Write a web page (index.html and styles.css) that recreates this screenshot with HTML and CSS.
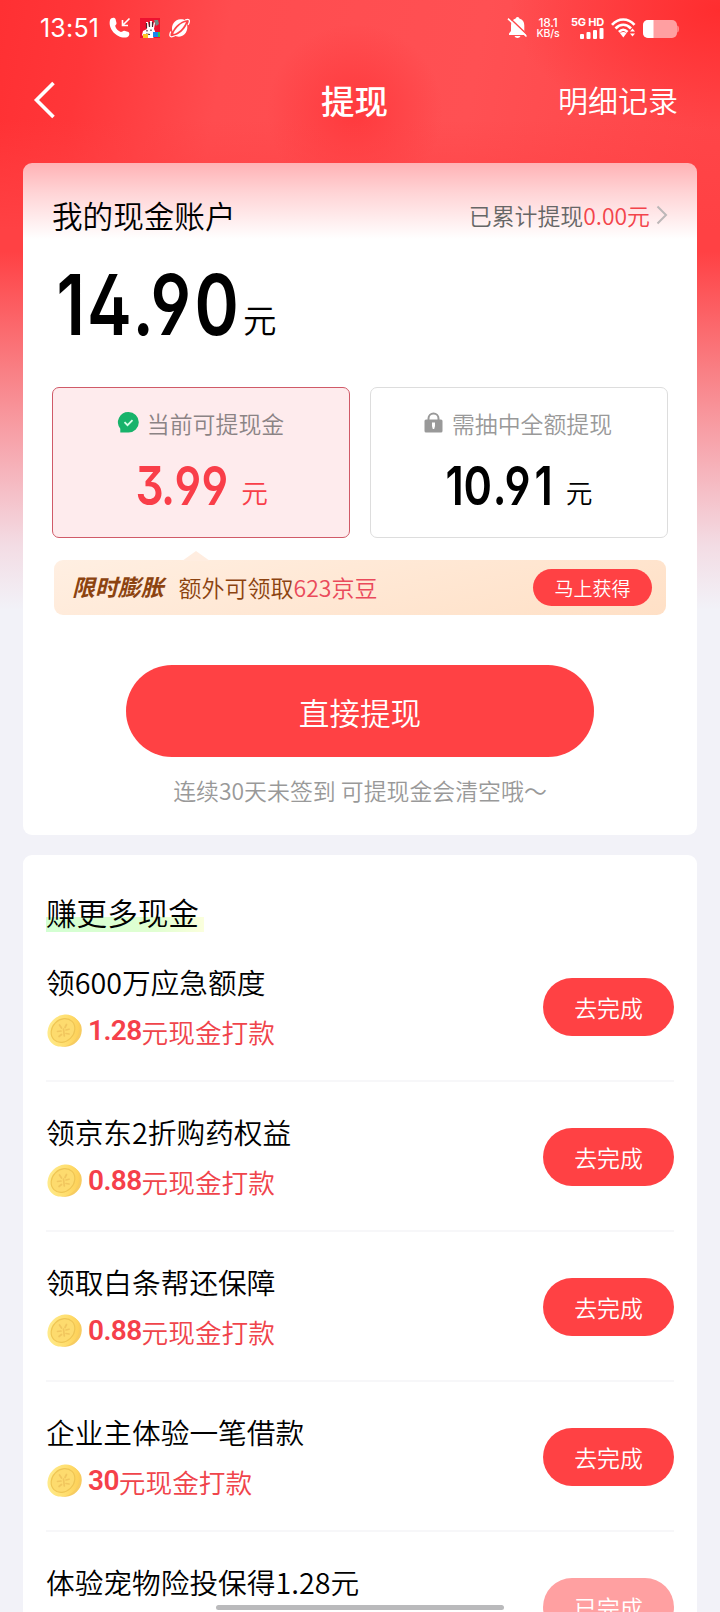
FILE: index.html
```html
<!DOCTYPE html>
<html lang="zh-CN">
<head>
<meta charset="utf-8">
<title>提现</title>
<link rel="stylesheet" href="styles.css">
</head>
<body>
<svg class="defs" width="0" height="0" aria-hidden="true">
  <defs>
    <linearGradient id="coinFace" x1="0" y1="0" x2="1" y2="1">
      <stop offset="0" stop-color="#ffee94"/><stop offset=".55" stop-color="#ffdf70"/><stop offset="1" stop-color="#fcc94c"/>
    </linearGradient>
    <symbol id="coin" viewBox="0 0 36 36">
      <ellipse cx="19.500" cy="18.500" rx="16" ry="14.500" fill="#f7cc60" transform="rotate(-45 19.500 18.500)"/>
      <ellipse cx="16.500" cy="17.500" rx="17.200" ry="14.800" fill="url(#coinFace)" transform="rotate(-45 16.500 17.500)"/>
      <ellipse cx="16" cy="17.500" rx="12.800" ry="10.800" fill="#fddb6e" stroke="#efc554" stroke-width="1.200" transform="rotate(-45 16 17.500)"/>
      <path d="M12.500 12l2 3M19.500 11.500l-1.500 3M10.500 18.500l3.500-.5M19 17l3-.8M12 23.500l2.500-2M19 20.500l3 .5M16.500 16l.8 7" fill="none" stroke="#f1c65e" stroke-width="1.700" stroke-linecap="round"/>
    </symbol>
  </defs>
</svg>
<div class="page">
  <div class="status">
    <span class="time">13:51</span>
    <svg class="ic-call" width="22" height="22" viewBox="0 0 22 22"><path d="M1 3C2 .5 5.500 0 6.500 2l1 4c.3 1.500-1.200 2-1.300 3 .7 2.700 3 5 5.700 6 1.300-.1 2-1.600 3.500-1.300l4 1.300c1.700 1 1 4.500-1.300 5.200C9.500 22.500-1.500 13 1 3z" fill="#fff"/><path d="M20.500 1.500L13.500 8.500M13.500 3v5.500h5.500" fill="none" stroke="#fff" stroke-width="1.600"/></svg>
    <svg class="ic-app" width="20" height="20" viewBox="0 0 20 20"><rect width="20" height="20" fill="#ed1230"/><path d="M14 2l4 0 1 4-3 2z" fill="#6f8a84"/><path d="M6 4l2 0 1 5 1-6 2 0 1 5 1-4 1 1-1 6 2 5-3 4H5l-3-3 1-4 4-2z" fill="#fff"/><path d="M6.500 5v5M9.500 4v5M12.500 4v5M7 12v1.500M11 11.500V13M6 16l4 .5" stroke="#4c2532" stroke-width="1.200"/><path d="M3 16h5v4H3z" fill="#ffc522"/><path d="M13 14h5v5h-5z" fill="#1687ed"/><path d="M18 14h2v5h-2z" fill="#3ac04a"/></svg>
    <svg class="ic-ball" width="21" height="20" viewBox="0 0 21 20"><path d="M3.500 13.500C1.500 7 6 1.500 11.500 1.300c2-.1 3.700.4 5 1.200C12 3.500 6 8 3.500 13.500zM18 6c1.500 6.500-2 12.500-8 12.700-2 0-3.500-.3-4.800-1.100C10 16.500 15.500 12 18 6z" fill="#fff"/><path d="M4.500 15C7.500 9 12 5 17 4 14.500 10 9.500 15 4.500 16z" fill="#fff"/><path d="M1.800 13.500C.3 16.500.5 18.800 2.300 18.800c1.200 0 2.200-.3 3.500-1M16 2c1.800-.8 3.200-1 3.900-.3.900.8.400 3-.8 5.200" fill="none" stroke="#fff" stroke-width="1.300"/></svg>
    <div class="status-right">
      <svg class="ic-bell" width="19" height="22" viewBox="0 0 19 22"><path d="M9.500 0c1.300 0 1.700.8 1.800 1.500 3.500 1 5 3.600 5 7v5.500l2 2.500v1.500H1v-1.500L3 14V8.500c0-3.400 1.500-6 4.700-7C8 .8 8.300 0 9.500 0zM6.500 19h6c-.8 2.500-5.200 2.500-6 0z" fill="#fff"/><path d="M1.200 .5L19 17.500" stroke="#ff484a" stroke-width="1.600"/><path d="M0 1.700L18.500 19.500" stroke="#fff" stroke-width="1.600"/></svg>
      <div class="speed"><span>18.1</span><span>KB/s</span></div>
      <div class="net"><span>5G HD</span><svg width="24" height="11" viewBox="0 0 24 11" fill="#fff"><rect y="6" width="4" height="5" rx="1"/><rect x="6.500" y="4" width="4" height="7" rx="1"/><rect x="13" y="2" width="4" height="9" rx="1"/><rect x="19.500" y="0" width="4" height="11" rx="1"/></svg></div>
      <svg class="ic-wifi" width="26" height="20" viewBox="0 0 26 20"><path d="M1 6.800C7.500-.3 17-.3 23.500 6.800M4.500 10.500c4.800-5 10.700-5 15.500 0M8 14c2.800-3 5.700-3 8.500 0" fill="none" stroke="#fff" stroke-width="2.700"/><path d="M9 15.200c2-1.600 4.500-1.600 6.500 0l-3.200 4.300z" fill="#fff"/><path d="M19 13.500L21.500 10.500 24 13.500zM19 15.500h5l-2.500 3z" fill="#fff"/></svg>
      <svg class="ic-battery" width="36" height="18" viewBox="0 0 36 18"><rect width="34" height="18" rx="5" fill="#ff9fa1"/><path d="M34.300 5.500c1.300.5 1.500 1.500 1.500 3.500s-.2 3-1.500 3.500z" fill="#ff9fa1"/><path d="M5 0h5.500v18H5a5 5 0 0 1-5-5V5a5 5 0 0 1 5-5z" fill="#fff"/></svg>
    </div>
  </div>

  <div class="nav">
    <svg class="back" width="24" height="40" viewBox="0 0 24 40"><path d="M21.500 3L4.500 20 21.500 37" fill="none" stroke="#fff" stroke-width="3.600"/></svg>
    <h1>提现</h1>
    <span class="records">明细记录</span>
  </div>

  <section class="card account">
    <div class="account-head">
      <h2>我的现金账户</h2>
      <div class="total">已累计提现<em>0.00元</em><svg width="12" height="22" viewBox="0 0 12 22"><path d="M1.500 2.500L10 11 1.500 19.500" fill="none" stroke="#bcb7b8" stroke-width="2"/></svg></div>
    </div>
    <div class="balance">
      <svg width="184" height="70" viewBox="0 0 184 70"><text class="num" transform="scale(.8 1)" x="3.100 41.300 98 120.600 175.600" y="66" font-size="84">14.90</text></svg>
      <span>元</span>
    </div>
    <div class="options">
      <div class="option active">
        <div class="label"><svg width="21" height="21" viewBox="0 0 21 21"><path d="M10.500 0a10.300 10.300 0 1 1 0 20.600H2.300V16.800A10.300 10.300 0 0 1 10.500 0z" fill="#18b36b"/><path d="M6.500 10.200l3 3 5-5" fill="none" stroke="#d9ffe9" stroke-width="1.800"/></svg>当前可提现金</div>
        <div class="amount"><svg width="95" height="44" viewBox="0 0 95 44"><text class="num" transform="scale(.82 1)" x="-.6 30.500 47 80" y="40" font-size="54">3.99</text></svg><span>元</span></div>
      </div>
      <div class="option">
        <div class="label lock"><svg width="19" height="21" viewBox="0 0 19 21"><path d="M4.500 9V6.500a5 5 0 0 1 10 0V9" fill="none" stroke="#999" stroke-width="2"/><rect x=".5" y="7.500" width="18" height="13" rx="1.500" fill="#999"/><path d="M8 10.500h3v3.500l-.8 3H8.800L8 14z" fill="#fff"/></svg>需抽中全额提现</div>
        <div class="amount ten"><svg width="108" height="44" viewBox="0 0 108 44"><text class="num" transform="scale(.8 1)" x="-.5 22 58.500 73 110.500" y="40" font-size="54">10.91</text></svg><span>元</span></div>
      </div>
    </div>
    <div class="promo">
      <strong>限时膨胀</strong>
      <span class="promo-text">额外可领取<em>623京豆</em></span>
      <span class="promo-btn">马上获得</span>
    </div>
    <div class="withdraw">直接提现</div>
    <p class="note">连续30天未签到 可提现金会清空哦～</p>
  </section>

  <section class="card tasks">
    <h2 class="tasks-title">赚更多现金</h2>
    <div class="task">
      <div><h3>领600万应急额度</h3><p><svg class="coin"><use href="#coin"/></svg><b>1.28</b>元现金打款</p></div>
      <span class="go">去完成</span>
    </div>
    <div class="task">
      <div><h3>领京东2折购药权益</h3><p><svg class="coin"><use href="#coin"/></svg><b>0.88</b>元现金打款</p></div>
      <span class="go">去完成</span>
    </div>
    <div class="task">
      <div><h3>领取白条帮还保障</h3><p><svg class="coin"><use href="#coin"/></svg><b>0.88</b>元现金打款</p></div>
      <span class="go">去完成</span>
    </div>
    <div class="task">
      <div><h3>企业主体验一笔借款</h3><p><svg class="coin"><use href="#coin"/></svg><b>30</b>元现金打款</p></div>
      <span class="go">去完成</span>
    </div>
    <div class="task">
      <div><h3>体验宠物险投保得1.28元</h3></div>
      <span class="go done">已完成</span>
    </div>
  </section>
  <div class="home-bar"></div>
</div>
</body>
</html>
```
FILE: styles.css
```css
* { box-sizing: border-box; margin: 0; padding: 0; }
body { background: #f2f2f8; font-family: "Noto Sans CJK SC", sans-serif; font-weight: 350; color: #000; }
em { font-style: normal; }
h1, h2, h3 { font-weight: 350; }
svg { display: block; flex: none; overflow: visible; }
.defs { position: absolute; }
.page {
  position: relative; width: 720px; height: 1612px; overflow: hidden; white-space: nowrap;
  background:
    linear-gradient(180deg, rgba(255,64,67,0) 0, rgba(255,64,67,0) 120px, #ff4144 230px, #ff4144 252px, #f97f84 370px, #f6b3bb 470px, #f3dce4 545px, #f2f2f8 610px) 0 0 / 720px 620px no-repeat,
    radial-gradient(circle at 355px 112px, rgba(255,52,56,.8), rgba(255,60,62,0) 88px),
    radial-gradient(ellipse 210px 120px at 720px 10px, #ff2d2f, rgba(255,60,62,0)),
    linear-gradient(100deg, #ff3033 0, #ff3639 90px, #ff4c4f 230px, #ff5053 480px, #ff4548 720px) 0 0 / 720px 620px no-repeat,
    #f2f2f8;
}

/* status bar */
.status { display: flex; align-items: center; height: 56px; padding: 0 41px 0 40px; color: #fff; }
.time { width: 62px; font: 400 25px/30px Inter, sans-serif; letter-spacing: .2px; }
.ic-call { margin-left: 7px; }
.ic-app { margin-left: 9px; }
.ic-ball { margin-left: 9px; }
.status-right { display: flex; align-items: center; margin-left: auto; }
.speed { width: 24px; margin-left: 9px; display: flex; flex-direction: column; align-items: center; font: 500 12px/11px Inter, sans-serif; letter-spacing: -.2px; }
.speed span:last-child { font-size: 10.500px; }
.net { width: 34px; margin-left: 10px; display: flex; flex-direction: column; align-items: flex-end; font: 700 11px/11px Inter, sans-serif; letter-spacing: -.2px; }
.ic-wifi { margin-left: 7px; }
.ic-battery { margin-left: 6px; margin-top: 2px; }

/* title row */
.nav { display: grid; grid-template-columns: 200px 1fr 200px; align-items: center; height: 92px; padding: 0 42px 4px 32px; color: #fff; }
.nav h1 { font-size: 33.500px; font-weight: 500; text-align: center; line-height: 50px; padding-right: 1px; }
.records { font-size: 30px; text-align: right; line-height: 46px; padding-bottom: 2px; }

.card { margin: 0 23px; border-radius: 9px; background: #fff; }
.account { height: 672px; margin-top: 15px; padding: 29px 29px 0; background: linear-gradient(180deg, #ffb2b5 0, #ffd4d6 30px, #fff 76px); }
.account-head { display: flex; align-items: center; justify-content: space-between; height: 46px; }
.account-head h2 { font-size: 30.600px; line-height: 46px; }
.total { display: flex; align-items: center; font-size: 22.900px; line-height: 34px; color: #666; }
.total em { color: #f3444b; }
.total svg { margin-left: 6px; }
.num { font-family: Inter, sans-serif; font-weight: 600; font-feature-settings: "ss01", "cv09"; fill: currentColor; }
.balance { display: flex; align-items: flex-end; height: 101px; padding-left: 2px; }
.balance span { margin: 0 0 -5px 5px; font-size: 33.500px; line-height: 50px; }

.options { display: grid; grid-template-columns: 298px 298px; gap: 20px; margin-top: 48px; }
.option { height: 151px; border: 1px solid #ddd; border-radius: 7px; padding-top: 18px; }
.option.active { border-color: #d05a68; background: #feebed; }
.label { display: flex; align-items: center; justify-content: center; gap: 8px; height: 34px; font-size: 22.900px; color: #8b8385; }
.label.lock { gap: 9px; color: #999; padding-right: 2px; }
.label svg { margin-top: -2px; }
.amount { display: flex; align-items: flex-end; justify-content: center; height: 69px; }
.amount span { margin: 0 0 -3px 10px; font-size: 26.700px; line-height: 40px; }
.active .amount { color: #f93e49; padding-left: 2px; }
.ten span { margin-left: 12px; }

.promo { position: relative; display: flex; align-items: center; width: 612px; height: 55px; margin: 22px 0 0 2px; padding: 0 14px 0 18px; border-radius: 9px; background: linear-gradient(165deg, #ffefe2, #ffe0c6); color: #8c4310; }
.promo::before { content: ""; position: absolute; left: 128px; top: -9px; width: 28px; height: 10px; background: #ffede0; clip-path: polygon(50% 0, 100% 100%, 0 100%); }
.promo strong { font-size: 22.900px; font-weight: 700; font-style: italic; line-height: 34px; margin-top: -4px; }
.promo-text { margin: -1px 0 0 15px; font-size: 23px; line-height: 34px; }
.promo-text em { color: #ea4a5b; }
.promo-btn { width: 119px; height: 37px; margin-left: auto; border-radius: 19px; background: #ff4144; color: #fff; text-align: center; font-size: 19px; line-height: 37px; }
.withdraw { width: 468px; height: 92px; margin: 50px auto 0; border-radius: 46px; background: #ff4144; color: #fff; text-align: center; font-size: 30.600px; line-height: 94px; }
.note { margin-top: 16px; text-align: center; color: #999; font-size: 22.900px; line-height: 34px; }

.tasks { height: 757px; margin-top: 20px; padding: 34px 23px 0; overflow: hidden; border-radius: 9px 9px 0 0; }
.tasks-title { width: 158px; height: 46px; font-size: 30.600px; line-height: 46px; background: linear-gradient(90deg, #d2ffd2, #e1ffd2 70%, #fbffdd) 0 28px / 158px 15px no-repeat; }
.task { display: flex; align-items: flex-start; justify-content: space-between; height: 150px; border-bottom: 2px solid #f7f7f9; padding-top: 28px; }
.tasks-title + .task { height: 147px; padding-top: 25px; }
.task h3 { font-size: 28.700px; line-height: 44px; }
.task p { display: flex; align-items: center; height: 40px; margin-top: 8px; font-size: 26.700px; line-height: 40px; color: #f0444b; }
.task b { font: 600 28px/40px Roboto, sans-serif; color: #f5404a; letter-spacing: -.6px; margin-top: -3px; }
.coin { width: 36px; height: 36px; margin: -2px 5px 0 1px; }
.go { width: 131px; height: 58px; margin-top: 18px; border-radius: 29px; background: #ff4144; color: #fff; text-align: center; font-size: 22.900px; line-height: 59px; }
.done { background: #ffa0a1; }
.home-bar { position: absolute; left: 216px; top: 1605px; width: 288px; height: 5px; border-radius: 3px; background: #bababc; }
```
